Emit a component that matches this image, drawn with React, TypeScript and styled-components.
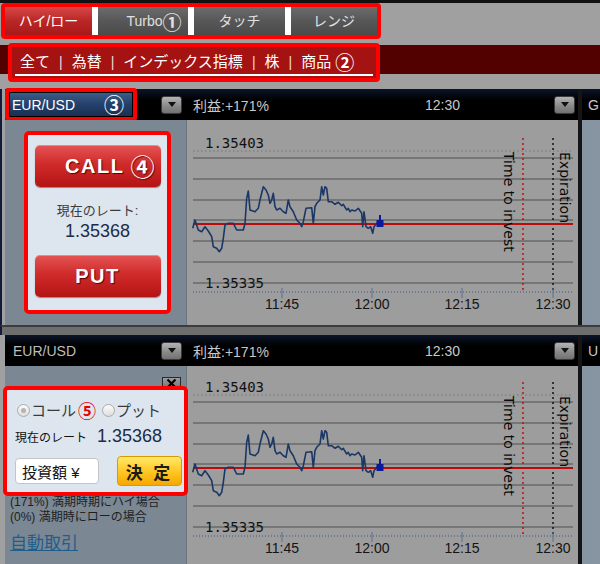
import React from "react";
import styled, { createGlobalStyle, css } from "styled-components";

const GlobalStyle = createGlobalStyle`
  html, body {
    margin: 0;
    padding: 0;
    background: #a0a0a0;
  }
  body {
    font-family: "Liberation Sans", "Noto Sans CJK JP", sans-serif;
  }
`;

// red annotation frame used by the numbered callouts
const annotated = css`
  box-sizing: border-box;
  border: 4px solid #ff0000;
  border-radius: 4px;
`;

const Page = styled.div`
  width: 600px;
  height: 564px;
  overflow: hidden;
  box-sizing: border-box;
  border-top: 3px solid #111;
  background: #a0a0a0;
`;

const Mark = styled.span<{ $size: number; $color?: string }>`
  font-family: "Noto Sans CJK JP", sans-serif;
  font-size: ${(p) => p.$size}px;
  font-weight: 700;
  line-height: 1;
  color: ${(p) => p.$color ?? "inherit"};
`;

const TabBox = styled.div`
  ${annotated}
  display: flex;
  gap: 6px;
  width: 380px;
  height: 36px;
  margin-left: 1px;
  background: #fff;
`;

const Tab = styled.div<{ $w: number; $active?: boolean; $shift?: number }>`
  width: ${(p) => p.$w}px;
  box-sizing: border-box;
  display: flex;
  align-items: center;
  justify-content: center;
  padding-left: ${(p) => p.$shift ?? 0}px;
  font-size: 14px;
  line-height: 1;
  color: ${(p) => (p.$active ? "#fff" : "#e0e0e0")};
  background: ${(p) =>
    p.$active
      ? "linear-gradient(#d64848, #bb2626 50%, #a71a1a)"
      : "linear-gradient(#6c6c6c, #575757 50%, #4b4b4b)"};
`;

const CategoryStrip = styled.div`
  margin-top: 4px;
  height: 39px;
  background: linear-gradient(
    transparent 2px,
    #520000 2px,
    #520000 31px,
    transparent 31px
  );
`;

const CategoryBox = styled.div`
  ${annotated}
  width: 372px;
  height: 39px;
  margin-left: 8px;
  padding: 0 3px 2px;
  background: #a51212;
`;

const CategoryList = styled.div`
  height: 100%;
  box-sizing: border-box;
  display: flex;
  align-items: center;
  padding: 2px 0 0 5px;
  border-bottom: 2px solid #fff;
  color: #fff;
  font-size: 15px;
  line-height: 1;
`;

const Divider = styled.span`
  margin: 0 9px;
  color: #f2dede;
  font-size: 14px;
`;

const PanelStack = styled.div`
  margin-top: 7px;
`;

const PanelRow = styled.div<{ $h: number; $edge: string }>`
  display: flex;
  height: ${(p) => p.$h}px;
  padding-left: 3px;
  border-left: 2px solid ${(p) => p.$edge};
`;

const PanelGap = styled.div`
  height: 10px;
  box-sizing: border-box;
  border-top: 2px solid #3c3c3c;
  border-left: 2px solid #141a3a;
  background: #6e6e6e;
`;

const Panel = styled.div`
  width: 573px;
  display: flex;
  flex-direction: column;
`;

const RowDivider = styled.div`
  width: 4px;
  background: #151515;
`;

const SidePanel = styled.div`
  flex: 1;
  display: flex;
  flex-direction: column;
`;

const PanelHeader = styled.div`
  height: 31px;
  flex-shrink: 0;
  display: flex;
  align-items: center;
  background: linear-gradient(#0c1529, #000 35%);
  color: #c8c8c8;
  font-size: 14px;
`;

const SideLetter = styled.span`
  padding-left: 6px;
`;

const SideBody = styled.div`
  flex: 1;
  background: #8795a3;
`;

const HeaderLeft = styled.div`
  width: 182px;
  height: 100%;
  box-sizing: border-box;
  display: flex;
  align-items: center;
  justify-content: space-between;
  padding-right: 5px;
`;

const HeaderRight = styled.div`
  flex: 1;
  display: grid;
  grid-template-columns: 232px 1fr auto;
  align-items: center;
  padding: 0 3px 0 6px;
`;

const PairBox = styled.div`
  ${annotated}
  width: 132px;
  height: 33px;
  padding: 1px;
  background: #000;
  border-radius: 3px;
`;

const PairLabel = styled.div`
  height: 100%;
  display: flex;
  align-items: center;
  justify-content: space-between;
  padding: 0 8px 0 2px;
  background: linear-gradient(#3a5c86, #24406a 50%, #1b3050);
  color: #fff;
  font-size: 14px;
`;

const PairText = styled.span`
  padding-left: 8px;
  color: #bdbdbd;
`;

const DropButton = styled.div`
  width: 21px;
  height: 18px;
  box-sizing: border-box;
  border: 1px solid #3a3a3a;
  border-radius: 3px;
  background: linear-gradient(#b4b4b4, #8a8a8a 55%, #727272);
  display: flex;
  align-items: center;
  justify-content: center;

  &::after {
    content: "";
    border-left: 4px solid transparent;
    border-right: 4px solid transparent;
    border-top: 5px solid #111;
  }
`;

const PanelBody = styled.div`
  flex: 1;
  display: flex;
  min-height: 0;
`;

const LeftCol = styled.div`
  width: 182px;
  box-sizing: border-box;
  border-right: 1px solid #6b7580;
  background: #7b8793;
  display: flex;
  flex-direction: column;
`;

const ChartCol = styled.div`
  flex: 1;
  background: #9d9d9d;
  overflow: hidden;
`;

const CallCard = styled.div`
  ${annotated}
  width: 147px;
  height: 183px;
  margin: 11px 0 0 19px;
  border-radius: 5px;
  padding: 10px 6px 0;
  background: #dde6ef;
  display: flex;
  flex-direction: column;
  align-items: center;
`;

const TradeButton = styled.div<{ $shift?: number }>`
  width: 126px;
  height: 42px;
  box-sizing: border-box;
  flex-shrink: 0;
  border-radius: 5px;
  padding-left: ${(p) => p.$shift ?? 0}px;
  background: linear-gradient(#e55454, #d02b2b 45%, #b41414);
  box-shadow: inset 0 1px 0 rgba(255, 255, 255, 0.3), 0 1px 1px rgba(0, 0, 0, 0.4);
  display: flex;
  align-items: center;
  justify-content: center;
  gap: 6px;
  color: #fff;
  font: bold 20px "Liberation Sans", sans-serif;
  letter-spacing: 1.5px;
  text-shadow: 1px 1px 1px #5a0000;
`;

const RateCaption = styled.div`
  margin-top: 17px;
  font-size: 13px;
  line-height: 14px;
  color: #3c3c3c;
`;

const RateValue = styled.div<{ $inline?: boolean }>`
  margin-top: ${(p) => (p.$inline ? 0 : 4)}px;
  margin-left: ${(p) => (p.$inline ? 10 : 0)}px;
  font-size: 18px;
  line-height: 18px;
  color: #1d2c46;
`;

const PutSpacer = styled.div`
  height: 15px;
`;

const CloseButton = styled.div`
  align-self: flex-end;
  width: 19px;
  height: 14px;
  margin: 11px 5px 0 0;
  box-sizing: border-box;
  border: 1px solid #2a2a2a;
  background: linear-gradient(#9c9c9c, #6c6c6c);
  display: flex;
  align-items: flex-start;
  justify-content: center;
`;

const TradeCard = styled.div`
  ${annotated}
  position: relative;
  z-index: 1;
  width: 185px;
  height: 110px;
  margin: -5px 0 0 -2px;
  border-radius: 5px;
  padding: 11px 0 0 8px;
  background: #dde6ef;
  display: flex;
  flex-direction: column;
`;

const RadioRow = styled.div`
  display: flex;
  align-items: center;
  height: 18px;
  padding-left: 2px;
  font-size: 15px;
  color: #3a3a3a;
`;

const Radio = styled.span<{ $checked?: boolean; $gap?: number }>`
  width: 13px;
  height: 13px;
  box-sizing: border-box;
  margin-left: ${(p) => p.$gap ?? 0}px;
  border: 1px solid #ababab;
  border-radius: 50%;
  background: linear-gradient(#fbfbfb, #dedede);
  display: flex;
  align-items: center;
  justify-content: center;

  &::after {
    content: "";
    display: ${(p) => (p.$checked ? "block" : "none")};
    width: 5px;
    height: 5px;
    border-radius: 50%;
    background: #b4b4b4;
  }
`;

const RadioText = styled.span`
  margin: 0 2px 0 1px;
  line-height: 1;
`;

const RateRow = styled.div`
  display: flex;
  align-items: center;
  height: 18px;
  margin-top: 8px;
  font-size: 12px;
  color: #111;
`;

const InputRow = styled.div`
  display: flex;
  align-items: center;
  height: 30px;
  margin-top: 11px;
`;

const AmountInput = styled.div`
  width: 84px;
  height: 26px;
  box-sizing: border-box;
  border: 1px solid #c4c4c4;
  border-radius: 4px;
  padding-left: 6px;
  background: #fff;
  display: flex;
  align-items: center;
  font-size: 15px;
  color: #111;
`;

const ConfirmButton = styled.div`
  width: 65px;
  height: 30px;
  margin-left: 18px;
  box-sizing: border-box;
  border: 1px solid #d99a00;
  border-radius: 4px;
  background: linear-gradient(#ffe96a, #ffc825 50%, #f6a800);
  display: flex;
  align-items: center;
  justify-content: center;
  font-size: 17px;
  font-weight: 700;
  letter-spacing: 3px;
  color: #1a1a1a;
`;

const InfoLines = styled.div`
  margin-top: -1px;
  padding-left: 5px;
  font-size: 12px;
  line-height: 15px;
  color: #1e1e1e;
`;

const AutoLink = styled.a`
  margin-top: 9px;
  padding-left: 5px;
  font-size: 17px;
  line-height: 20px;
  color: #1d5e8c;
  text-decoration: underline;
`;

const ChartSvg = styled.svg`
  display: block;
`;

const series =
  "5.7,108.3 8,100 11.3,110 14.7,111.7 18,106.7 21.3,111 24.7,116.7 26.3,126.7 29.7,128.3 32.3,131.7 34.7,128.3 36.3,118.3 38,105 41.3,103.3 46.3,103.3 49.7,110 56.3,110 58,103.3 59.7,78.3 61.3,71 63,90 68,91.7 71.3,88.3 73,80 76.3,66.7 79,70 81.3,75 83,83.3 84.7,80 86.3,73.3 88,86.7 89.7,90 93,88.3 96.3,91.7 99,93.3 101.3,80 103,86.7 106.3,91.7 109.7,100 113,103.3 114.7,106.7 116.3,101.7 119,88.3 124.7,87.7 126.3,103.3 128,86.7 129.7,83.3 133,80 134.7,66.7 136.3,75 138,66.7 139.7,68.3 141.3,81.7 144.7,81.7 148,84.3 151.3,82.3 154.7,85.7 156.3,84.3 159.7,90 161.3,88.3 163,91.7 164.7,90 168,91 171.3,88.3 174.7,93.3 175.7,106.7 177,91.7 179,106.7 181.3,108.3 183.7,106.7 185.7,113.3 187,106.7 189.7,103.3 193,102.3";

const gridRows = [38, 59, 80, 100, 121, 142, 163];
const ticks = [
  { x: 95, label: "11:45" },
  { x: 185, label: "12:00" },
  { x: 275, label: "12:15" },
  { x: 366, label: "12:30" },
];

function PriceChart({ shift }: { shift: number }) {
  return (
    <ChartSvg width="391" height="205" viewBox="0 0 391 205">
      <g transform={`translate(0 ${shift})`}>
        <line x1="6" x2="386" y1="31" y2="31" stroke="#767676" strokeDasharray="1.5 2.5" />
        {gridRows.map((y) => (
          <line key={y} x1="6" x2="386" y1={y} y2={y} stroke="#767676" strokeWidth="2" />
        ))}
        <line x1="336" x2="336" y1="18" y2="172" stroke="#c01010" strokeWidth="1.5" strokeDasharray="2 3" />
        <line x1="366" x2="366" y1="18" y2="172" stroke="#111" strokeWidth="1.5" strokeDasharray="2 3" />
        <line x1="6" x2="386" y1="104" y2="104" stroke="#b80c0c" strokeWidth="2" />
        <polyline points={series} fill="none" stroke="#1b3766" strokeWidth="1.6" strokeLinejoin="round" />
        <line x1="193" x2="193" y1="95" y2="101" stroke="#0a1a9a" strokeWidth="2" />
        <rect x="189.5" y="100" width="7" height="7" fill="#0a1a9a" />
        <line x1="6" x2="386" y1="172" y2="172" stroke="#5b6f94" strokeWidth="1.5" strokeDasharray="1 2" />
        {ticks.map((t) => (
          <g key={t.label}>
            <line x1={t.x} x2={t.x} y1="168" y2="178" stroke="#5b6f94" strokeWidth="1" />
            <text
              x={t.x}
              y="189"
              textAnchor="middle"
              fontFamily="Liberation Sans, sans-serif"
              fontSize="14"
              fill="#141414"
            >
              {t.label}
            </text>
          </g>
        ))}
        <text x="18" y="28" fontFamily="DejaVu Sans Mono, monospace" fontSize="14" fill="#111">
          1.35403
        </text>
        <text x="18" y="168" fontFamily="DejaVu Sans Mono, monospace" fontSize="14" fill="#111">
          1.35335
        </text>
        <text
          x="317"
          y="32"
          transform="rotate(90 317 32)"
          fontFamily="DejaVu Sans, sans-serif"
          fontSize="14"
          fill="#0a0a0a"
        >
          Time to invest
        </text>
        <text
          x="373"
          y="32"
          transform="rotate(90 373 32)"
          fontFamily="DejaVu Sans, sans-serif"
          fontSize="14"
          fill="#0a0a0a"
        >
          Expiration
        </text>
      </g>
    </ChartSvg>
  );
}

function HeaderInfo() {
  return (
    <HeaderRight>
      <span>利益:+171%</span>
      <span>12:30</span>
      <DropButton />
    </HeaderRight>
  );
}

export default function App() {
  return (
    <>
      <GlobalStyle />
      <Page>
        <TabBox>
          <Tab $w={87} $active>
            ハイ/ロー
          </Tab>
          <Tab $w={90} $shift={22}>
            Turbo<Mark $size={19}>①</Mark>
          </Tab>
          <Tab $w={91}>タッチ</Tab>
          <Tab $w={86}>レンジ</Tab>
        </TabBox>

        <CategoryStrip>
          <CategoryBox>
            <CategoryList>
              全て<Divider>|</Divider>為替<Divider>|</Divider>インデックス指標
              <Divider>|</Divider>株<Divider>|</Divider>商品&nbsp;
              <Mark $size={19}>②</Mark>
            </CategoryList>
          </CategoryBox>
        </CategoryStrip>

        <PanelStack>
          <PanelRow $h={236} $edge="#141a3a">
            <Panel>
              <PanelHeader>
                <HeaderLeft>
                  <PairBox>
                    <PairLabel>
                      EUR/USD<Mark $size={20}>③</Mark>
                    </PairLabel>
                  </PairBox>
                  <DropButton />
                </HeaderLeft>
                <HeaderInfo />
              </PanelHeader>
              <PanelBody>
                <LeftCol>
                  <CallCard>
                    <TradeButton $shift={26}>
                      CALL<Mark $size={24}>④</Mark>
                    </TradeButton>
                    <RateCaption>現在のレート:</RateCaption>
                    <RateValue>1.35368</RateValue>
                    <PutSpacer />
                    <TradeButton>PUT</TradeButton>
                  </CallCard>
                </LeftCol>
                <ChartCol>
                  <PriceChart shift={0} />
                </ChartCol>
              </PanelBody>
            </Panel>
            <RowDivider />
            <SidePanel>
              <PanelHeader>
                <SideLetter>G</SideLetter>
              </PanelHeader>
              <SideBody />
            </SidePanel>
          </PanelRow>

          <PanelGap />

          <PanelRow $h={229} $edge="#a0a0a0">
            <Panel>
              <PanelHeader>
                <HeaderLeft>
                  <PairText>EUR/USD</PairText>
                  <DropButton />
                </HeaderLeft>
                <HeaderInfo />
              </PanelHeader>
              <PanelBody>
                <LeftCol>
                  <CloseButton>
                    <svg width="11" height="11" viewBox="0 0 11 11">
                      <path d="M1.5 1.5 L9.5 9.5 M9.5 1.5 L1.5 9.5" stroke="#000" strokeWidth="2.2" />
                    </svg>
                  </CloseButton>
                  <TradeCard>
                    <RadioRow>
                      <Radio $checked />
                      <RadioText>コール</RadioText>
                      <Mark $size={18} $color="#e60000">
                        ⑤
                      </Mark>
                      <Radio $gap={6} />
                      <RadioText>プット</RadioText>
                    </RadioRow>
                    <RateRow>
                      現在のレート
                      <RateValue $inline>1.35368</RateValue>
                    </RateRow>
                    <InputRow>
                      <AmountInput>投資額 ¥</AmountInput>
                      <ConfirmButton>決 定</ConfirmButton>
                    </InputRow>
                  </TradeCard>
                  <InfoLines>
                    (171%) 満期時期にハイ場合
                    <br />
                    (0%) 満期時にローの場合
                  </InfoLines>
                  <AutoLink>自動取引</AutoLink>
                </LeftCol>
                <ChartCol>
                  <PriceChart shift={-2} />
                </ChartCol>
              </PanelBody>
            </Panel>
            <RowDivider />
            <SidePanel>
              <PanelHeader>
                <SideLetter>U</SideLetter>
              </PanelHeader>
              <SideBody />
            </SidePanel>
          </PanelRow>
        </PanelStack>
      </Page>
    </>
  );
}
